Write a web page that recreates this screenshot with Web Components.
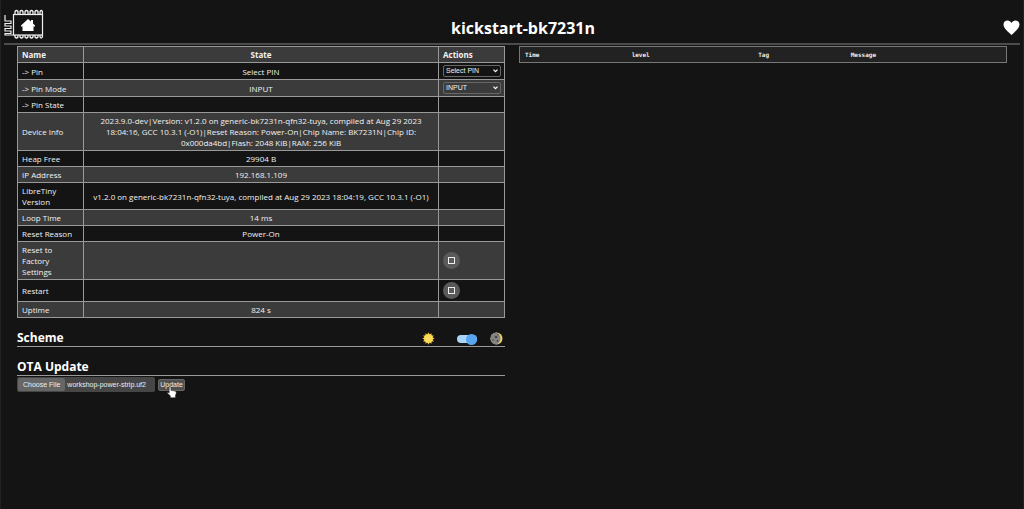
<!DOCTYPE html>
<html lang="en">
<head>
<meta charset="utf-8">
<title>kickstart-bk7231n</title>
<style>
html { min-height: 100%; background: #141414; color-scheme: dark; }
body { margin: 0; color: #f2f2f2; font-family: "Open Sans", "Noto Sans", sans-serif; font-size: 8px; line-height: 11px; }
</style>
</head>
<body>
<esp-app></esp-app>
<script>
class Base extends HTMLElement {
  constructor() {
    super();
    this.attachShadow({ mode: 'open' }).innerHTML = this.template();
  }
}

customElements.define('esp-logo', class extends Base {
  template() {
    return `<style>:host{display:block}a{display:block;color:#fff}svg{display:block}</style>
    <a href="#" aria-label="Home"><svg width="42" height="31" viewBox="0 0 42 31" fill="none" stroke="#eee" stroke-width="1.2">
      <path d="M1 6V12H7V14.500H1V17H7V19.500H1V22H7V24.500H1V26H9.500"/>
      <rect x="9.500" y="5.500" width="29" height="20.500"/>
      <path stroke-width="1.300" d="M11 5.500v-3q1.500-2 3 0v3m2 0v-3q1.500-2 3 0v3m2 0v-3q1.500-2 3 0v3m2 0v-3q1.500-2 3 0v3m2 0v-3q1.500-2 3 0v3m2 0v-3q1.200-2 2.400 0v3"/>
      <path stroke-width="1.300" d="M11 26v2q1.500 2 3 0v-2m2 0v2q1.500 2 3 0v-2m2 0v2q1.500 2 3 0v-2m2 0v2q1.500 2 3 0v-2m2 0v2q1.500 2 3 0v-2m2 0v2q1.200 2 2.400 0v-2"/>
      <path fill="#fff" stroke="none" d="M24 10l3 2.500V11h2v3.500l2 2v1h-1.500V22h-11v-4.500H17v-1z"/>
    </svg></a>`;
  }
});

customElements.define('esp-header', class extends Base {
  template() {
    return `<style>
    :host{display:block;padding:9px 3px 0}
    header{display:grid;grid-template-columns:1fr auto 1fr;align-items:center;height:34px;border-bottom:2px solid #4c4c4c}
    esp-logo{align-self:start}
    h1{margin:0 0 0 22px;padding-top:4px;font-size:16px;line-height:24px;font-weight:700;color:#fff}
    .heart{justify-self:end;padding-top:2px}
    svg{display:block}
    </style>
    <header><esp-logo></esp-logo><h1><slot></slot></h1>
    <svg class="heart" width="17" height="15" viewBox="0 0 17 15" role="img" aria-label="Sponsor"><path fill="#fff" d="M8.500 15C6 12.500.5 8.500.5 4.500.5 2 2.400.5 4.500.5c1.700 0 3.200 1 4 2.500.8-1.500 2.300-2.500 4-2.500 2.100 0 4 1.500 4 4 0 4-5.500 8-8 10.500z"/></svg></header>`;
  }
});

customElements.define('esp-select', class extends Base {
  template() {
    const v = this.getAttribute('value'), l = this.getAttribute('label');
    return `<style>
    :host{display:grid;width:58px}
    select,svg{grid-area:1/1}
    select{appearance:none;box-sizing:border-box;width:100%;height:12px;margin:0;padding:0 12px 0 2px;border:1px solid #666;border-radius:2px;background:transparent;color:#f2f2f2;font:7px/10px "Liberation Sans",sans-serif}
    option{background:#222}
    svg{justify-self:end;align-self:center;margin-right:3px;pointer-events:none}
    </style>
    <select aria-label="${l}"><option>${v}</option></select>
    <svg width="5" height="4" viewBox="0 0 5 4"><path d="M.5 .7l2 2 2-2" fill="none" stroke="#fff" stroke-width="1.200"/></svg>`;
  }
});

customElements.define('esp-press', class extends Base {
  template() {
    return `<style>:host{display:block}
    button{display:grid;place-items:center;width:17px;height:17px;margin:0;padding:0;border:0;border-radius:50%;background:#5a5a5a}
    i{width:5px;height:5px;border:1px solid #eee}</style>
    <button type="button" aria-label="${this.getAttribute('label')}"><i></i></button>`;
  }
});

customElements.define('esp-entities', class extends Base {
  template() {
    const sel = (v, l) => `<esp-select value="${v}" label="${l}"></esp-select>`;
    const press = l => `<esp-press label="${l}"></esp-press>`;
    const rows = [
      ['-&gt; Pin', 'Select PIN', sel('Select PIN', 'Pin')],
      ['-&gt; Pin Mode', 'INPUT', sel('INPUT', 'Pin Mode')],
      ['-&gt; Pin State', '', ''],
      ['Device Info', '2023.9.0-dev|Version: v1.2.0 on generic-bk7231n-qfn32-tuya, compiled at Aug 29 2023 18:04:16, GCC 10.3.1 (-O1)|Reset Reason: Power-On|Chip Name: BK7231N|Chip ID: 0x000da4bd|Flash: 2048 KiB|RAM: 256 KiB', ''],
      ['Heap Free', '29904 B', ''],
      ['IP Address', '192.168.1.109', ''],
      ['LibreTiny Version', 'v1.2.0 on generic-bk7231n-qfn32-tuya, compiled at Aug 29 2023 18:04:19, GCC 10.3.1 (-O1)', ''],
      ['Loop Time', '14 ms', ''],
      ['Reset Reason', 'Power-On', ''],
      ['Reset to Factory Settings', '', press('Reset to Factory Settings')],
      ['Restart', '', press('Restart')],
      ['Uptime', '824 s', '']
    ];
    return `<style>
    :host{display:block}
    table{width:100%;border-collapse:collapse;table-layout:fixed;border:1px solid #999}
    col:first-child,col:last-child{width:66px}
    th,td{height:11px;padding:2px 4px;border:1px solid #999;text-align:left;vertical-align:middle}
    td:first-child{padding-right:7px}
    th:nth-child(2),td:nth-child(2){text-align:center}
    tr{background:#141414}
    thead tr,tbody tr:nth-child(even){background:#3b3b3b}
    </style>
    <table><colgroup><col><col><col></colgroup>
    <thead><tr><th>Name</th><th>State</th><th>Actions</th></tr></thead>
    <tbody>${rows.map(r => `<tr><td>${r[0]}</td><td>${r[1]}</td><td>${r[2]}</td></tr>`).join('')}</tbody></table>`;
  }
});

customElements.define('esp-section', class extends Base {
  template() {
    return `<style>
    :host{display:block}
    header{display:flex;justify-content:space-between;align-items:center;height:16px;border-bottom:1px solid #999}
    h2{margin:0;font-size:12px;line-height:16px;font-weight:700;color:#fff}
    </style>
    <header><h2>${this.getAttribute('heading')}</h2><slot name="tools"></slot></header><slot></slot>`;
  }
});

customElements.define('esp-scheme', class extends Base {
  template() {
    const rays = Array.from({ length: 12 }, (_, i) => `<path d="M6.500 .3l1.500 3h-3z" transform="rotate(${i * 30} 6.5 6.5)"/>`).join('');
    return `<style>
    :host{display:flex;align-items:center}
    svg{display:block}
    input{appearance:none;box-sizing:border-box;display:flex;align-items:center;justify-content:flex-end;width:20px;height:8px;margin:2px 13px 0 22px;border-radius:4px;background:#a9d3f8}
    input::before{content:"";width:11px;height:11px;flex:none;border-radius:50%;background:#57a5f0}
    input:not(:checked){justify-content:flex-start}
    .moon{margin-right:2px}
    </style>
    <svg width="13" height="13" viewBox="0 0 13 13" fill="#f3c63c">${rays}<circle cx="6.500" cy="6.500" r="4.300" fill="#f9dc58"/></svg>
    <input type="checkbox" role="switch" aria-label="Dark scheme" checked>
    <svg class="moon" width="13" height="13" viewBox="0 0 13 13"><circle cx="6.500" cy="6.500" r="6" fill="#f2cf66"/><path fill="#858585" d="M6.500.5a6 6 0 0 0 0 12C9 11.500 10.500 9 10.500 6.500S9 1.500 6.500.5z"/><g fill="#484848"><circle cx="6" cy="5" r="1.300"/><circle cx="3" cy="8" r=".8"/><circle cx="7.500" cy="9" r=".9"/><circle cx="8" cy="2.800" r=".7"/></g></svg>`;
  }
});

customElements.define('esp-ota', class extends Base {
  template() {
    return `<style>
    :host{display:block;margin-top:1px;font:7px/11px "Liberation Sans",sans-serif}
    form{display:flex;align-items:center;gap:3px}
    .file{position:relative;display:flex;align-items:center;box-sizing:border-box;width:138px;height:15px;padding:1px;gap:2px;border-radius:2px;background:#464646;color:#eee}
    .file b{font-weight:400;background:#666;border-radius:2px;padding:1px 5px;white-space:nowrap}
    .file span{white-space:nowrap}
    .file input{position:absolute;inset:0;width:100%;opacity:0}
    .submit{position:relative}
    button{display:block;box-sizing:border-box;width:27px;height:12px;margin:0;padding:0;border:1px solid #666;border-radius:2px;background:#505050;color:#eee;font:7px/10px "Liberation Sans",sans-serif}
    svg{position:absolute;left:9px;top:7px;pointer-events:none}
    </style>
    <form><label class="file"><b>Choose File</b><span>workshop-power-strip.uf2</span><input type="file" aria-label="Firmware file"></label>
    <div class="submit"><button type="button">Update</button>
    <svg width="10" height="12" viewBox="0 0 10 12"><path fill="#fff" stroke="#222" stroke-width=".5" d="M2.200 1.200q.9-1.200 1.700 0v3.100l4.200.8q1.300.4 1.200 1.700L8.400 10v1.700H3.400V10L.4 7q0-1.400 1.800-.2z"/></svg></div></form>`;
  }
});

customElements.define('esp-log', class extends Base {
  template() {
    return `<style>
    :host{display:block;font-family:"DejaVu Sans Mono",monospace;font-size:6px}
    table{width:100%;border-collapse:collapse;table-layout:fixed;border:1px solid #777}
    tr{background:#222}
    th{box-sizing:border-box;height:16px;padding:2px 5px;text-align:left;line-height:11px;color:#eee}
    .t{width:22%}.l{width:26%}.g{width:19%}
    </style>
    <table><thead><tr><th class="t">Time</th><th class="l">level</th><th class="g">Tag</th><th>Message</th></tr></thead></table>`;
  }
});

customElements.define('esp-app', class extends Base {
  template() {
    return `<style>
    :host{display:block;box-sizing:border-box;min-height:100vh;border:1px solid #222;border-width:0 1px}
    main{display:grid;grid-template-columns:minmax(0,1fr) minmax(0,1fr);gap:14px;padding:1px 16px 0}
    .left{display:grid;gap:12px;align-content:start}
    </style>
    <esp-header>kickstart-bk7231n</esp-header>
    <main>
      <div class="left">
        <esp-entities></esp-entities>
        <esp-section heading="Scheme"><esp-scheme slot="tools"></esp-scheme></esp-section>
        <esp-section heading="OTA Update"><esp-ota></esp-ota></esp-section>
      </div>
      <esp-log></esp-log>
    </main>`;
  }
});
</script>
</body>
</html>
